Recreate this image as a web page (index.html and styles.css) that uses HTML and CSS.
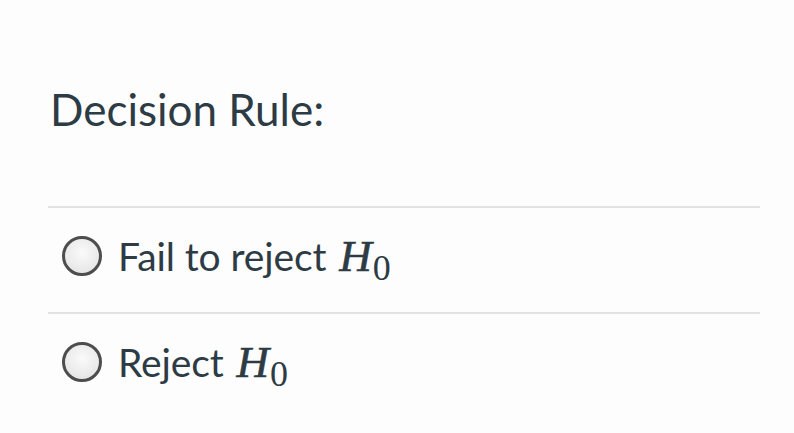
FILE: index.html
```html
<!DOCTYPE html>
<html>
<head>
<meta charset="utf-8">
<link rel="stylesheet" href="styles.css">
</head>
<body>
<div class="question">
  <div class="title">Decision Rule:</div>
  <div class="answers">
    <label class="answer">
      <span class="radio"></span>
      <span class="text">Fail to reject <span class="math"><i>H</i><sub>0</sub></span></span>
    </label>
    <label class="answer">
      <span class="radio"></span>
      <span class="text">Reject <span class="math"><i>H</i><sub>0</sub></span></span>
    </label>
  </div>
</div>
</body>
</html>
```
FILE: styles.css
```css
html, body {
  margin: 0;
  padding: 0;
  background: #fdfdfd;
}
body {
  font-family: Lato, "Open Sans", sans-serif;
  color: #2d3b45;
}
.question {
  padding: 79px 34px 0 48px;
}
.title {
  font-size: 44px;
  line-height: 60px;
  padding-left: 2px;
  height: 127px;
}
.answers {
  display: flex;
  flex-direction: column;
}
.answer {
  display: flex;
  align-items: center;
  gap: 16px;
  border-top: 2px solid #e2e2e2;
  padding-left: 14px;
  padding-bottom: 8px;
  box-sizing: border-box;
  height: 106px;
}
.radio {
  width: 34px;
  height: 34px;
  border: 3px solid #4d4d4d;
  border-radius: 50%;
  background: radial-gradient(circle at 50% 40%, #fafafa 0%, #e8e8e8 70%, #d8d8d8 100%);
  flex: none;
}
.text {
  font-size: 39px;
  line-height: 50px;
  letter-spacing: -0.1px;
}
.math {
  font-family: "Liberation Serif", "DejaVu Serif", serif;
  font-size: 45px;
  margin-left: 3px;
  -webkit-text-stroke: 0.6px #2d3b45;
}
.math sub {
  font-size: 36px;
  font-style: normal;
  font-weight: normal;
  vertical-align: -9px;
  line-height: 0;
  -webkit-text-stroke: 0;
  margin-left: 1px;
}
```
